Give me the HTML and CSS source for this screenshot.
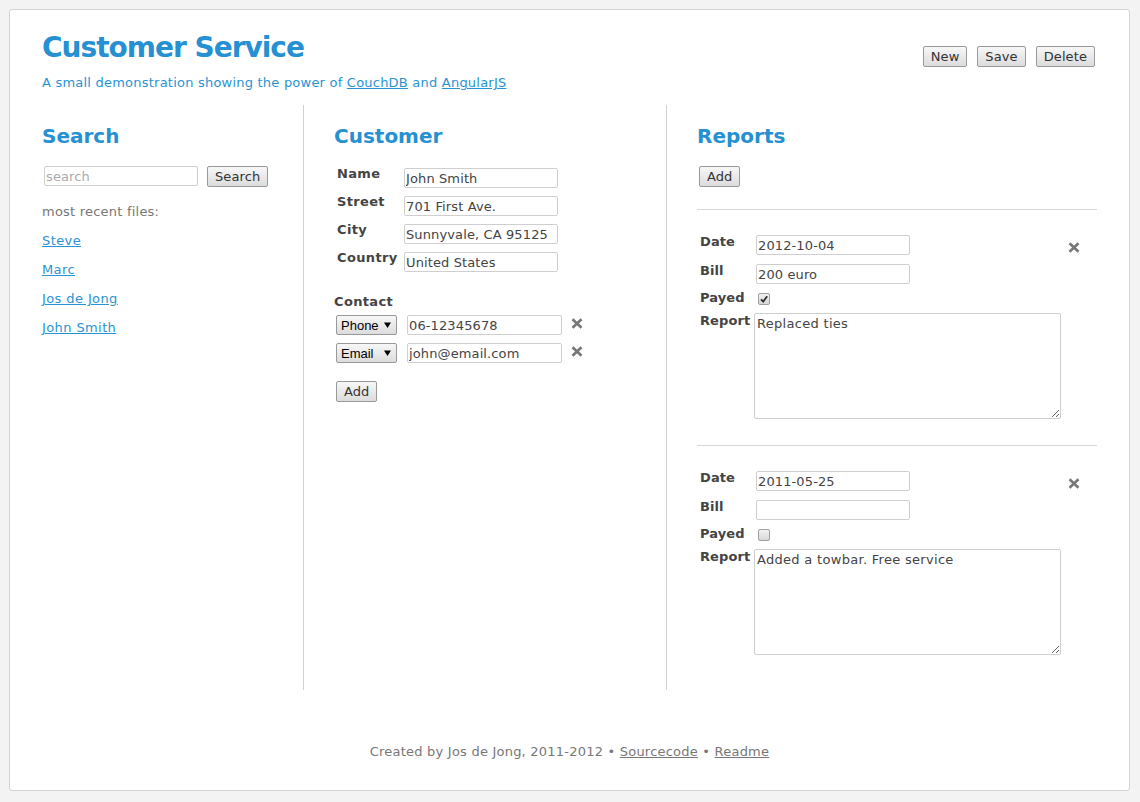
FILE: index.html
```html
<!DOCTYPE html>
<html lang="en">
<head>
<meta charset="utf-8">
<title>Customer Service</title>
<link rel="stylesheet" href="styles.css">
</head>
<body>
<div class="page">
  <header class="header">
    <div class="intro">
      <h1 class="title">Customer Service</h1>
      <p class="subtitle">A small demonstration showing the power of <a href="#">CouchDB</a> and <a href="#">AngularJS</a></p>
    </div>
    <div class="actions">
      <button class="btn">New</button>
      <button class="btn">Save</button>
      <button class="btn">Delete</button>
    </div>
  </header>

  <main class="columns">
    <section class="col col-search">
      <h2 class="col-title">Search</h2>
      <div class="search-row">
        <input class="field" type="text" placeholder="search">
        <button class="btn">Search</button>
      </div>
      <ul class="recent">
        <li class="recent-label">most recent files:</li>
        <li><a href="#">Steve</a></li>
        <li><a href="#">Marc</a></li>
        <li><a href="#">Jos de Jong</a></li>
        <li><a href="#">John Smith</a></li>
      </ul>
    </section>

    <section class="col col-customer">
      <h2 class="col-title">Customer</h2>
      <div class="form">
        <label class="form-label">Name</label><input class="field form-input" type="text" value="John Smith">
        <label class="form-label">Street</label><input class="field form-input" type="text" value="701 First Ave.">
        <label class="form-label">City</label><input class="field form-input" type="text" value="Sunnyvale, CA 95125">
        <label class="form-label">Country</label><input class="field form-input" type="text" value="United States">
      </div>
      <div class="contact-title">Contact</div>
      <div class="contacts">
        <div class="contact-row">
          <span class="select-wrap">
            <select class="select"><option>Phone</option><option>Email</option></select>
            <svg class="select-arrow" width="7" height="6" viewBox="0 0 7 6"><path d="M0 0.5 H7 L3.5 6 Z" fill="#000"/></svg>
          </span>
          <input class="field" type="text" value="06-12345678">
          <svg class="remove" width="12" height="11" viewBox="0 0 12 11"><path d="M1.5 1.2 L10.5 9.8 M10.5 1.2 L1.5 9.8" stroke="#777" stroke-width="2.6" fill="none"/></svg>
        </div>
        <div class="contact-row">
          <span class="select-wrap">
            <select class="select"><option>Email</option><option>Phone</option></select>
            <svg class="select-arrow" width="7" height="6" viewBox="0 0 7 6"><path d="M0 0.5 H7 L3.5 6 Z" fill="#000"/></svg>
          </span>
          <input class="field" type="text" value="john@email.com">
          <svg class="remove" width="12" height="11" viewBox="0 0 12 11"><path d="M1.5 1.2 L10.5 9.8 M10.5 1.2 L1.5 9.8" stroke="#777" stroke-width="2.6" fill="none"/></svg>
        </div>
      </div>
      <button class="btn add-contact">Add</button>
    </section>

    <section class="col col-reports">
      <h2 class="col-title">Reports</h2>
      <button class="btn add-report">Add</button>

      <div class="report">
        <div class="report-fields">
          <div class="r-row r-date"><label class="r-label">Date</label><input class="field r-input" type="text" value="2012-10-04"></div>
          <div class="r-row r-bill"><label class="r-label">Bill</label><input class="field r-input" type="text" value="200 euro"></div>
          <div class="r-row r-payed"><label class="r-label">Payed</label><span class="check is-checked"><svg width="10" height="10" viewBox="0 0 10 10"><path d="M2 5.3 L4.2 7.6 L8.2 2.2" stroke="#333" stroke-width="1.9" fill="none"/></svg></span></div>
          <div class="r-row r-report"><label class="r-label">Report</label><textarea class="r-text">Replaced ties</textarea></div>
        </div>
        <svg class="remove report-remove" width="12" height="11" viewBox="0 0 12 11"><path d="M1.5 1.2 L10.5 9.8 M10.5 1.2 L1.5 9.8" stroke="#777" stroke-width="2.6" fill="none"/></svg>
      </div>

      <div class="report">
        <div class="report-fields">
          <div class="r-row r-date"><label class="r-label">Date</label><input class="field r-input" type="text" value="2011-05-25"></div>
          <div class="r-row r-bill"><label class="r-label">Bill</label><input class="field r-input" type="text" value=""></div>
          <div class="r-row r-payed"><label class="r-label">Payed</label><span class="check"></span></div>
          <div class="r-row r-report"><label class="r-label">Report</label><textarea class="r-text">Added a towbar. Free service</textarea></div>
        </div>
        <svg class="remove report-remove" width="12" height="11" viewBox="0 0 12 11"><path d="M1.5 1.2 L10.5 9.8 M10.5 1.2 L1.5 9.8" stroke="#777" stroke-width="2.6" fill="none"/></svg>
      </div>
    </section>
  </main>

  <footer class="footer">
    Created by Jos de Jong, 2011-2012 &bull; <a href="#">Sourcecode</a> &bull; <a href="#">Readme</a>
  </footer>
</div>
</body>
</html>
```

FILE: styles.css
```css
html, body {
  margin: 0;
  background: #f3f3f3;
}
body {
  padding: 9px 10px 0 9px;
  font-family: "DejaVu Sans", Verdana, sans-serif;
  font-size: 13px;
  letter-spacing: 0.22px;
  color: #444;
}
.page {
  box-sizing: border-box;
  height: 782px;
  background: #fff;
  border: 1px solid #d3d3d3;
  border-radius: 3px;
  padding: 21px 32px 0 32px;
  display: flex;
  flex-direction: column;
}
a { color: #2a93d5; }

.header {
  display: flex;
  justify-content: space-between;
  align-items: flex-start;
}
.title {
  margin: 0;
  font-size: 28px;
  line-height: 33px;
  font-weight: bold;
  letter-spacing: -1px;
  color: #2590d2;
}
.subtitle {
  margin: 11px 0 0 0;
  line-height: 15px;
  color: #2a93d5;
}
.actions {
  display: flex;
  gap: 10px;
  margin-top: 15px;
  padding-right: 2px;
}
.btn {
  box-sizing: border-box;
  height: 21px;
  padding: 0 7px;
  margin: 0;
  font-family: "DejaVu Sans", Verdana, sans-serif;
  font-size: 13px;
  letter-spacing: 0.1px;
  color: #333;
  background: linear-gradient(#f7f7f7, #dcdcdc);
  border: 1px solid #999;
  border-radius: 2px;
}

.columns {
  margin-top: 15px;
  height: 585px;
  display: grid;
  grid-template-columns: 262px 363px 1fr;
}
.col {
  padding-top: 20px;
  box-sizing: border-box;
}
.col-search { border-right: 1px solid #d0d0d0; }
.col-customer { border-right: 1px solid #d0d0d0; padding-left: 30px; }
.col-reports { padding-left: 30px; }
.col-title {
  margin: 0 0 18px 0;
  font-size: 20px;
  line-height: 23px;
  font-weight: bold;
  letter-spacing: 0;
  color: #2590d2;
}

.field {
  box-sizing: border-box;
  width: 154px;
  height: 20px;
  margin: 0;
  padding: 0 0 0 1px;
  border: 1px solid #cfcfcf;
  border-radius: 2px;
  font-family: "DejaVu Sans", Verdana, sans-serif;
  font-size: 13px;
  letter-spacing: 0.12px;
  color: #444;
  background: #fff;
}
.field::placeholder { color: #aaa; }

.search-row {
  display: flex;
  align-items: flex-start;
  gap: 9px;
  padding-left: 2px;
}
.recent {
  list-style: none;
  margin: 10px 0 0 0;
  padding: 0;
}
.recent li { line-height: 29.5px; }
.recent li + li { margin-top: -0.5px; }
.recent a { letter-spacing: 0.4px; }
.recent-label { color: #777; }

.form {
  display: grid;
  grid-template-columns: 67px 154px;
  grid-auto-rows: 28px;
  padding-left: 3px;
}
.form-label {
  font-weight: bold;
  line-height: 15px;
  letter-spacing: 0.35px;
  color: #444;
}
.form-input { margin-top: 2px; }

.contact-title {
  margin-top: 16px;
  font-weight: bold;
  line-height: 15px;
  letter-spacing: 0.35px;
  color: #444;
}
.contacts {
  margin-top: 6px;
  padding-left: 2px;
  display: flex;
  flex-direction: column;
  gap: 8px;
}
.contact-row {
  display: flex;
  align-items: flex-start;
  gap: 10px;
}
.contact-row .field { width: 155px; }
.select-wrap {
  position: relative;
  display: block;
  width: 61px;
  height: 20px;
}
.select {
  appearance: none;
  -webkit-appearance: none;
  box-sizing: border-box;
  width: 61px;
  height: 20px;
  margin: 0;
  padding: 0 0 0 4px;
  font-family: "Liberation Sans", Arial, sans-serif;
  font-size: 13px;
  letter-spacing: 0;
  color: #000;
  background: linear-gradient(#f7f7f7, #dcdcdc);
  border: 1px solid #999;
  border-radius: 2px;
}
.select-arrow {
  position: absolute;
  right: 6px;
  top: 7px;
  pointer-events: none;
}
.remove {
  display: block;
  margin-top: 3px;
  margin-left: -1px;
}
.add-contact {
  margin-top: 18px;
  margin-left: 2px;
  align-self: flex-start;
}

.add-report {
  margin-left: 2px;
  margin-bottom: 22px;
}
.report {
  border-top: 1px solid #d6d6d6;
  padding: 24px 0 26px 3px;
  display: flex;
  align-items: flex-start;
}
.report-fields {
  display: flex;
  flex-direction: column;
}
.r-row {
  display: flex;
  align-items: flex-start;
}
.r-label {
  width: 54px;
  flex: none;
  font-weight: bold;
  line-height: 15px;
  letter-spacing: 0.1px;
  color: #444;
}
.r-date { height: 29px; }
.r-bill { height: 27px; }
.r-payed { height: 23px; }
.r-input { margin: 1px 0 0 2px; }
.check {
  box-sizing: border-box;
  width: 12px;
  height: 12px;
  margin: 3px 0 0 4px;
  border: 1px solid #a0a0a0;
  border-radius: 2px;
  background: linear-gradient(#f2f2f2, #d8d8d8);
  display: flex;
  align-items: center;
  justify-content: center;
}
.r-text {
  box-sizing: border-box;
  width: 307px;
  height: 106px;
  margin: 0;
  padding: 2px;
  border: 1px solid #cfcfcf;
  border-radius: 2px;
  font-family: "DejaVu Sans", Verdana, sans-serif;
  font-size: 13px;
  line-height: 15px;
  letter-spacing: 0.3px;
  color: #444;
}
.report-remove {
  margin-top: 8px;
  margin-left: 7px;
}

.footer {
  margin-top: 54px;
  text-align: center;
  line-height: 15px;
  color: #777;
}
.footer a { color: #777; }
```
